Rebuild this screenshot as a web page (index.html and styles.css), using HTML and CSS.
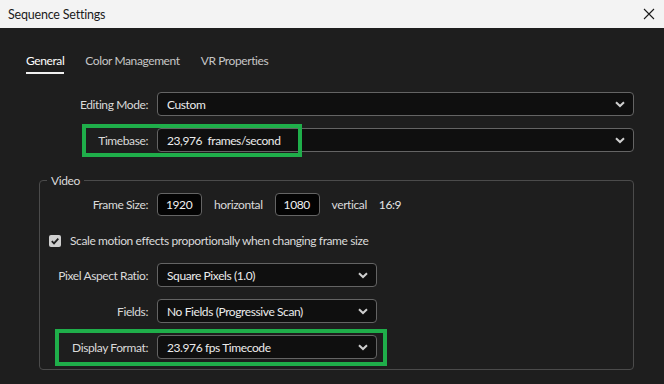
FILE: index.html
```html
<!DOCTYPE html>
<html>
<head>
<meta charset="utf-8">
<link rel="stylesheet" href="styles.css">
</head>
<body>
<div class="window">
  <div class="titlebar">
    <span class="title">Sequence Settings</span>
    <svg class="close" width="12" height="12" viewBox="0 0 12 12"><path d="M1 1 L11 11 M11 1 L1 11" stroke="#1a1a1a" stroke-width="1.1" fill="none"/></svg>
  </div>
  <div class="tabs">
    <span class="tab active">General</span>
    <span class="tab">Color Management</span>
    <span class="tab">VR Properties</span>
  </div>
  <div class="form">
    <div class="row">
      <span class="label">Editing Mode:</span>
      <div class="select wide"><span>Custom</span><svg class="chev" width="10" height="7" viewBox="0 0 10 7"><path d="M1 1.2 L5 5 L9 1.2" stroke="#cfcfcf" stroke-width="2" fill="none"/></svg></div>
    </div>
    <div class="row hl-row">
      <span class="label">Timebase:</span>
      <div class="select wide"><span>23,976&nbsp; frames/second</span><svg class="chev" width="10" height="7" viewBox="0 0 10 7"><path d="M1 1.2 L5 5 L9 1.2" stroke="#cfcfcf" stroke-width="2" fill="none"/></svg></div>
      <div class="highlight hl-timebase"></div>
    </div>
    <fieldset class="group">
      <legend>Video</legend>
      <div class="grow">
        <span class="glabel">Frame Size:</span>
        <div class="sizes">
          <span class="num">1920</span>
          <span class="unit">horizontal</span>
          <span class="num">1080</span>
          <span class="unit">vertical</span>
          <span class="ratio">16:9</span>
        </div>
      </div>
      <div class="check-row">
        <span class="checkbox"><svg width="12" height="12" viewBox="0 0 12 12"><path d="M2.8 6.2 L5 8.4 L9.3 3.6" stroke="#1e1e1e" stroke-width="1.8" fill="none"/></svg></span>
        <span class="check-text">Scale motion effects proportionally when changing frame size</span>
      </div>
      <div class="grow">
        <span class="glabel">Pixel Aspect Ratio:</span>
        <div class="select mid"><span>Square Pixels (1.0)</span><svg class="chev" width="10" height="7" viewBox="0 0 10 7"><path d="M1 1.2 L5 5 L9 1.2" stroke="#cfcfcf" stroke-width="2" fill="none"/></svg></div>
      </div>
      <div class="grow">
        <span class="glabel">Fields:</span>
        <div class="select mid"><span>No Fields (Progressive Scan)</span><svg class="chev" width="10" height="7" viewBox="0 0 10 7"><path d="M1 1.2 L5 5 L9 1.2" stroke="#cfcfcf" stroke-width="2" fill="none"/></svg></div>
      </div>
      <div class="grow hl-row">
        <span class="glabel">Display Format:</span>
        <div class="select mid"><span>23.976 fps Timecode</span><svg class="chev" width="10" height="7" viewBox="0 0 10 7"><path d="M1 1.2 L5 5 L9 1.2" stroke="#cfcfcf" stroke-width="2" fill="none"/></svg></div>
        <div class="highlight hl-display"></div>
      </div>
    </fieldset>
  </div>
</div>
</body>
</html>
```
FILE: styles.css
```css
* { box-sizing: border-box; }
html, body {
  margin: 0;
  padding: 0;
  width: 664px;
  height: 384px;
  overflow: hidden;
  background: #1e1e1e;
  font-family: Lato, "Noto Sans", sans-serif;
}
.window {
  width: 664px;
  height: 384px;
  background: #1e1e1e;
  letter-spacing: -0.4px;
}
.titlebar {
  height: 28px;
  background: #f3f3f3;
  display: flex;
  align-items: center;
  justify-content: space-between;
  padding: 0 9px 0 8px;
}
.title {
  font-size: 12.5px;
  color: #1b1b1b;
  letter-spacing: -0.2px;
}
.close { display: block; }
.tabs {
  display: flex;
  gap: 21px;
  padding: 25px 0 0 26px;
  height: 64px;
}
.tab {
  font-size: 12px;
  color: #c6c6c6;
  height: 21px;
  line-height: 16px;
}
.tab.active {
  color: #ffffff;
  border-bottom: 2px solid #f0f0f0;
}
.form {
  display: flex;
  flex-direction: column;
  gap: 12px;
}
.row {
  display: flex;
  align-items: center;
  gap: 9px;
  position: relative;
}
.label {
  width: 148px;
  text-align: right;
  font-size: 12px;
  color: #dadada;
}
.select {
  height: 24px;
  border: 1px solid #646464;
  border-radius: 4px;
  background: #0f0f0f;
  display: flex;
  align-items: center;
  justify-content: space-between;
  padding: 0 8px 0 9px;
  font-size: 12px;
  color: #ececec;
}
.select.wide { width: 477px; }
.select.mid { width: 220px; }
.chev { display: block; }
.highlight {
  position: absolute;
  border: 4px solid #1fae4a;
  pointer-events: none;
}
.hl-timebase {
  left: 82px;
  top: -4px;
  width: 220px;
  height: 33px;
}
.group {
  margin: 9px 0 0 39px;
  width: 595px;
  height: 197px;
  border: 1px solid #4b4b4b;
  border-radius: 4px;
  padding: 5px 0 0 0;
  display: flex;
  flex-direction: column;
}
.group legend {
  font-size: 12px;
  color: #dadada;
  padding: 0 4px;
  margin-left: 7px;
}
.grow {
  display: flex;
  align-items: center;
  gap: 9px;
  position: relative;
  margin-bottom: 12px;
}
.glabel {
  width: 108px;
  text-align: right;
  font-size: 12px;
  color: #dadada;
}
.sizes {
  display: flex;
  align-items: center;
  gap: 12px;
  font-size: 12px;
  color: #dadada;
}
.num {
  width: 45px;
  height: 23px;
  border: 1px solid #646464;
  border-radius: 4px;
  background: #030303;
  display: flex;
  align-items: center;
  padding-left: 8px;
  color: #f0f0f0;
}
.ratio { color: #e6e6e6; }
.check-row {
  display: flex;
  align-items: center;
  gap: 9px;
  padding-left: 9px;
  margin: 5px 0 15px 0;
}
.checkbox {
  width: 12px;
  height: 12px;
  background: #cfcfcf;
  border-radius: 2px;
  display: flex;
}
.check-text {
  font-size: 12px;
  color: #dadada;
}
.hl-display {
  left: 15px;
  top: -6px;
  width: 332px;
  height: 37px;
}
```
